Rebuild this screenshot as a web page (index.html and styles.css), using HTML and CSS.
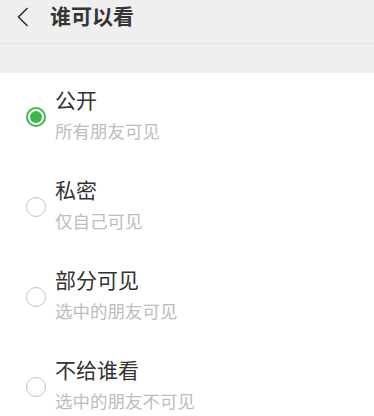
FILE: index.html
```html
<!DOCTYPE html>
<html lang="zh">
<head>
<meta charset="utf-8">
<link rel="stylesheet" href="styles.css">
</head>
<body>
<div class="header">
  <svg class="back" width="12" height="20" viewBox="0 0 12 20"><path d="M10.5 1 L1.5 10 L10.5 19" fill="none" stroke="#333" stroke-width="1.6"/></svg>
  <div class="title">谁可以看</div>
</div>
<div class="gap"></div>
<div class="list">
  <div class="item">
    <span class="radio checked"></span>
    <div class="text"><div class="name">公开</div><div class="desc">所有朋友可见</div></div>
  </div>
  <div class="item">
    <span class="radio"></span>
    <div class="text"><div class="name">私密</div><div class="desc">仅自己可见</div></div>
  </div>
  <div class="item">
    <span class="radio"></span>
    <div class="text"><div class="name">部分可见</div><div class="desc">选中的朋友可见</div></div>
  </div>
  <div class="item">
    <span class="radio"></span>
    <div class="text"><div class="name">不给谁看</div><div class="desc">选中的朋友不可见</div></div>
  </div>
</div>
</body>
</html>
```
FILE: styles.css
```css
html, body { margin: 0; padding: 0; }
body {
  width: 374px;
  height: 416px;
  overflow: hidden;
  background: #ffffff;
  font-family: "Noto Sans CJK SC", "Noto Sans", sans-serif;
}
.header {
  height: 44px;
  box-sizing: border-box;
  background: #efefef;
  border-bottom: 1px solid #e4e4e4;
  display: flex;
  align-items: flex-start;
}
.back {
  margin: 7px 0 0 17px;
}
.title {
  margin-left: 21px;
  font-size: 21px;
  line-height: 30px;
  font-weight: bold;
  color: #353535;
}
.gap {
  height: 29px;
  background: #efefef;
}
.item {
  display: flex;
  align-items: flex-start;
  padding: 14px 0 20px 26px;
  height: 56px;
}
.radio {
  width: 20px;
  height: 20px;
  box-sizing: border-box;
  border: 1.5px solid #c4c4c4;
  border-radius: 50%;
  margin-top: 20px;
  flex: none;
  display: flex;
  align-items: center;
  justify-content: center;
}
.radio.checked {
  border: 2px solid #3eb54a;
}
.radio.checked::after {
  content: "";
  width: 12px;
  height: 12px;
  border-radius: 50%;
  background: #3eb54a;
}
.text {
  margin-left: 9px;
}
.name {
  font-size: 21px;
  line-height: 24px;
  color: #333333;
  margin-bottom: 8px;
}
.desc {
  font-size: 17.5px;
  line-height: 24px;
  color: #bdbdbd;
}
```
